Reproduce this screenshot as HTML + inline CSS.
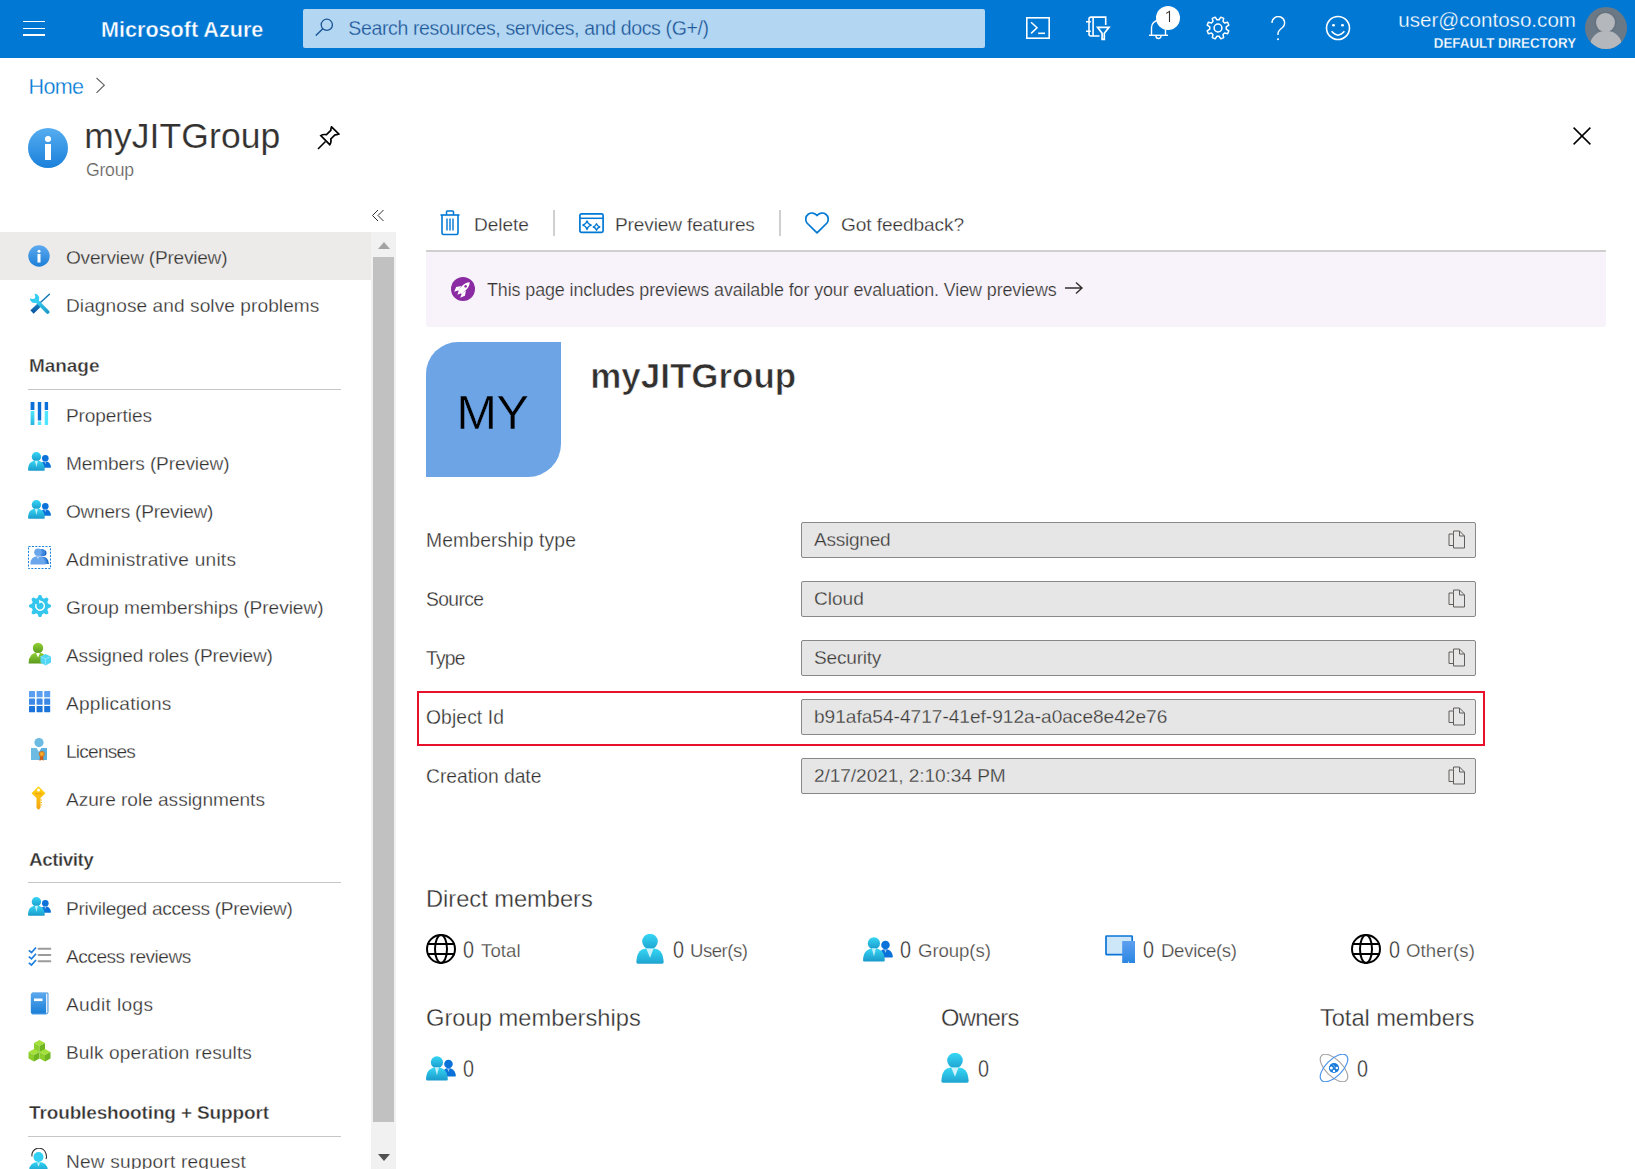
<!DOCTYPE html>
<html><head><meta charset="utf-8">
<style>
*{margin:0;padding:0;box-sizing:border-box}
html,body{width:1635px;height:1169px;overflow:hidden;background:#fff;font-family:"Liberation Sans",sans-serif;color:#323130}
.a{position:absolute;display:block}
.t{position:absolute;line-height:1;white-space:nowrap}
</style></head><body>
<div class="a" style="left:0px;top:0px;width:1635px;height:58px;background:#0078d4;"></div>
<div class="a" style="left:23px;top:20.8px;width:22px;height:1.6px;background:#fff;"></div>
<div class="a" style="left:23px;top:27.5px;width:22px;height:1.6px;background:#fff;"></div>
<div class="a" style="left:23px;top:34.2px;width:22px;height:1.6px;background:#fff;"></div>
<div class="t" style="left:101.00px;top:18.72px;font-size:21.60px;color:#fff;font-weight:700;-webkit-text-stroke:0.41px #0078d4;">Microsoft Azure</div>
<div class="a" style="left:303px;top:9px;width:682px;height:39px;background:#b3d6f2;border-radius:2px"></div>
<svg class="a" style="left:315px;top:18px;" width="18" height="18" viewBox="0 0 18 18"><circle cx="11.8" cy="6.8" r="5.6" fill="none" stroke="#1a5596" stroke-width="1.3"/><line x1="7.8" y1="10.8" x2="0.8" y2="17.6" stroke="#1a5596" stroke-width="1.4"/></svg>
<div class="t" style="left:348.30px;top:18.89px;font-size:19.50px;color:#1d5796;font-weight:400;-webkit-text-stroke:0.27px #b3d6f2;letter-spacing:-0.36px">Search resources, services, and docs (G+/)</div>
<svg class="a" style="left:1026px;top:17px;" width="24" height="22" viewBox="0 0 24 22"><rect x="0.8" y="0.8" width="22.4" height="20.4" fill="none" stroke="#fff" stroke-width="1.6"/><polyline points="5.1,5.3 11,10.8 5.1,16.4" fill="none" stroke="#fff" stroke-width="1.5"/><line x1="12.2" y1="16.3" x2="19" y2="16.3" stroke="#fff" stroke-width="1.6"/></svg>
<svg class="a" style="left:1086px;top:16px;" width="26" height="26" viewBox="0 0 26 26"><g fill="none" stroke="#fff" stroke-width="1.6"><path d="M13.5 20 H5 Q3 20 3 18 V3 Q3 1.1 5 1.1 H19.7 V9"/><path d="M7.1 1 V20"/><path d="M0 5.7 H4.8 M0 15.2 H4.8"/></g><path d="M11.6 11.4 H23 L18.3 17.3 V23.3 H16.1 V17.3 Z" fill="#0078d4" stroke="#fff" stroke-width="1.7" stroke-linejoin="miter"/></svg>
<svg class="a" style="left:1148px;top:16px;" width="21" height="25" viewBox="0 0 21 25"><path d="M3.5 19 V11.5 A7 7 0 0 1 17.5 11.5 V19" fill="none" stroke="#fff" stroke-width="1.4"/><line x1="1" y1="19.3" x2="20" y2="19.3" stroke="#fff" stroke-width="1.4"/><path d="M8 20 A2.5 2.5 0 0 0 13 20" fill="none" stroke="#fff" stroke-width="1.4"/></svg>
<div class="a" style="left:1156px;top:6px;width:24px;height:24px;border-radius:50%;background:#fff"></div>
<svg class="a" style="left:1164px;top:10px;" width="8" height="13" viewBox="0 0 8 13"><path d="M2.2 3.4 L5.5 1.4 V12" fill="none" stroke="#323130" stroke-width="1.1"/></svg>
<svg class="a" style="left:1206px;top:16px;" width="24" height="24" viewBox="0 0 24 24"><g fill="none" stroke="#fff" stroke-width="1.5"><polygon points="13.08,3.77 14.80,1.16 17.68,2.35 17.05,5.42 18.58,6.95 21.65,6.32 22.84,9.20 20.23,10.92 20.23,13.08 22.84,14.80 21.65,17.68 18.58,17.05 17.05,18.58 17.68,21.65 14.80,22.84 13.08,20.23 10.92,20.23 9.20,22.84 6.32,21.65 6.95,18.58 5.42,17.05 2.35,17.68 1.16,14.80 3.77,13.08 3.77,10.92 1.16,9.20 2.35,6.32 5.42,6.95 6.95,5.42 6.32,2.35 9.20,1.16 10.92,3.77" stroke-linejoin="round"/><circle cx="12" cy="12" r="3.9"/></g></svg>
<svg class="a" style="left:1271px;top:16px;" width="15" height="25" viewBox="0 0 15 25"><path d="M1 7 A6.3 6.3 0 1 1 11.5 11.5 Q7 15 7 17.5 V19" fill="none" stroke="#fff" stroke-width="1.4"/><circle cx="7" cy="23.2" r="1" fill="#fff"/></svg>
<svg class="a" style="left:1325px;top:15px;" width="26" height="26" viewBox="0 0 26 26"><circle cx="13" cy="13" r="11.5" fill="none" stroke="#fff" stroke-width="1.6"/><ellipse cx="8.5" cy="10.2" rx="1.5" ry="1.2" fill="#fff"/><ellipse cx="17.5" cy="10.2" rx="1.5" ry="1.2" fill="#fff"/><path d="M6.6 16.3 Q13 24 19.4 16.3" fill="none" stroke="#fff" stroke-width="1.5"/></svg>
<div class="t" style="right:59.00px;top:9.56px;font-size:20.60px;color:#fff;font-weight:400;-webkit-text-stroke:0.28px #0078d4;">user@contoso.com</div>
<div class="t" style="right:59.00px;top:34.88px;font-size:15.50px;color:#fff;font-weight:700;-webkit-text-stroke:0.29px #0078d4;transform:scaleX(0.862);transform-origin:right center">DEFAULT DIRECTORY</div>
<div class="a" style="left:1585px;top:7px;width:42px;height:42px;border-radius:50%;background:#6b7886;overflow:hidden"><div class="a" style="left:11px;top:6px;width:19px;height:19px;border-radius:50%;background:#b4b8bd;box-shadow:0 0 0 1.5px #66727f"></div><div class="a" style="left:5px;top:24px;width:32px;height:22px;border-radius:15px 15px 4px 4px;background:#b4b8bd"></div></div>
<div class="t" style="left:28.60px;top:76.02px;font-size:21.60px;color:#0078d4;font-weight:400;-webkit-text-stroke:0.30px #fff;letter-spacing:-0.75px">Home</div>
<svg class="a" style="left:95px;top:77px;" width="11" height="17" viewBox="0 0 11 17"><polyline points="1.5,1 9.3,8.2 1.5,15.8" fill="none" stroke="#605e5c" stroke-width="1.1"/></svg>
<div class="a" style="left:28px;top:128px;width:40px;height:40px;border-radius:50%;background:linear-gradient(#56adf0,#1a80db)"></div>
<div class="a" style="left:45.1px;top:136px;width:5.8px;height:5.6px;border-radius:50%;background:#fff"></div>
<div class="a" style="left:45.3px;top:143.9px;width:5.3px;height:16.1px;background:#fff;"></div>
<div class="t" style="left:84.30px;top:118.95px;font-size:35.50px;color:#323130;font-weight:400;-webkit-text-stroke:0.20px #fff;letter-spacing:0.083px;">myJITGroup</div>
<div class="t" style="left:86.00px;top:161.70px;font-size:17.60px;color:#605e5c;font-weight:400;-webkit-text-stroke:0.24px #fff;letter-spacing:-0.232px;">Group</div>
<svg class="a" style="left:316px;top:125.5px;" width="24" height="25" viewBox="0 0 24 25"><path d="M2 23 L9.5 15.5" stroke="#000" stroke-width="1.6"/><path d="M4.8 9.6 Q7 8 10.5 8.7 L14.8 4.4 Q14.8 2.5 15.5 0.8 L22.8 8 Q21 8.8 19 8.8 L14.8 13 Q15.5 16.5 13.8 18.7 Z" fill="none" stroke="#000" stroke-width="1.7" stroke-linejoin="miter"/></svg>
<svg class="a" style="left:1572px;top:126px;" width="20" height="20" viewBox="0 0 20 20"><path d="M1.6 1.6 L18.4 18.4 M18.4 1.6 L1.6 18.4" stroke="#000" stroke-width="1.5"/></svg>
<svg class="a" style="left:371px;top:209px;" width="14" height="14" viewBox="0 0 14 14"><polyline points="7,1 1.5,6.5 7,12" fill="none" stroke="#323130" stroke-width="1"/><polyline points="12.5,1 7,6.5 12.5,12" fill="none" stroke="#323130" stroke-width="1"/></svg>
<div class="a" style="left:0px;top:232px;width:371px;height:48px;background:#edebe9;"></div>
<div class="a" style="left:371px;top:232px;width:25px;height:937px;background:#f1f1f1;"></div>
<div class="a" style="left:373px;top:257px;width:21px;height:865px;background:#c1c1c1;"></div>
<svg class="a" style="left:378px;top:241px;" width="12" height="8" viewBox="0 0 12 8"><polygon points="0,8 6,1 12,8" fill="#a3a3a3"/></svg>
<svg class="a" style="left:378px;top:1154px;" width="12" height="8" viewBox="0 0 12 8"><polygon points="0,0 12,0 6,7" fill="#505050"/></svg>
<div class="t" style="left:66.00px;top:247.83px;font-size:19.10px;color:#323130;font-weight:400;-webkit-text-stroke:0.26px #edebe9;letter-spacing:-0.235px;">Overview (Preview)</div>
<div class="t" style="left:66.00px;top:295.83px;font-size:19.10px;color:#323130;font-weight:400;-webkit-text-stroke:0.26px #fff;letter-spacing:0.071px;">Diagnose and solve problems</div>
<div class="t" style="left:66.00px;top:405.83px;font-size:19.10px;color:#323130;font-weight:400;-webkit-text-stroke:0.26px #fff;letter-spacing:-0.122px;">Properties</div>
<div class="t" style="left:66.00px;top:453.83px;font-size:19.10px;color:#323130;font-weight:400;-webkit-text-stroke:0.26px #fff;letter-spacing:-0.125px;">Members (Preview)</div>
<div class="t" style="left:66.00px;top:501.83px;font-size:19.10px;color:#323130;font-weight:400;-webkit-text-stroke:0.26px #fff;letter-spacing:-0.283px;">Owners (Preview)</div>
<div class="t" style="left:66.00px;top:549.83px;font-size:19.10px;color:#323130;font-weight:400;-webkit-text-stroke:0.26px #fff;letter-spacing:0.232px;">Administrative units</div>
<div class="t" style="left:66.00px;top:597.83px;font-size:19.10px;color:#323130;font-weight:400;-webkit-text-stroke:0.26px #fff;letter-spacing:-0.054px;">Group memberships (Preview)</div>
<div class="t" style="left:66.00px;top:645.83px;font-size:19.10px;color:#323130;font-weight:400;-webkit-text-stroke:0.26px #fff;letter-spacing:-0.185px;">Assigned roles (Preview)</div>
<div class="t" style="left:66.00px;top:693.83px;font-size:19.10px;color:#323130;font-weight:400;-webkit-text-stroke:0.26px #fff;letter-spacing:0.223px;">Applications</div>
<div class="t" style="left:66.00px;top:741.83px;font-size:19.10px;color:#323130;font-weight:400;-webkit-text-stroke:0.26px #fff;letter-spacing:-0.778px;">Licenses</div>
<div class="t" style="left:66.00px;top:789.83px;font-size:19.10px;color:#323130;font-weight:400;-webkit-text-stroke:0.26px #fff;letter-spacing:-0.028px;">Azure role assignments</div>
<div class="t" style="left:66.00px;top:898.83px;font-size:19.10px;color:#323130;font-weight:400;-webkit-text-stroke:0.26px #fff;letter-spacing:-0.290px;">Privileged access (Preview)</div>
<div class="t" style="left:66.00px;top:946.83px;font-size:19.10px;color:#323130;font-weight:400;-webkit-text-stroke:0.26px #fff;letter-spacing:-0.477px;">Access reviews</div>
<div class="t" style="left:66.00px;top:994.83px;font-size:19.10px;color:#323130;font-weight:400;-webkit-text-stroke:0.26px #fff;letter-spacing:0.350px;">Audit logs</div>
<div class="t" style="left:66.00px;top:1042.83px;font-size:19.10px;color:#323130;font-weight:400;-webkit-text-stroke:0.26px #fff;letter-spacing:0.108px;">Bulk operation results</div>
<div class="t" style="left:66.00px;top:1151.83px;font-size:19.10px;color:#323130;font-weight:400;-webkit-text-stroke:0.26px #fff;letter-spacing:0.206px;">New support request</div>
<svg class="a" style="left:28px;top:245px;" width="22" height="22" viewBox="0 0 22 22"><defs><linearGradient id="ig" x1="0" y1="0" x2="0" y2="1"><stop offset="0" stop-color="#5ea9ef"/><stop offset="1" stop-color="#1b7fd7"/></linearGradient></defs><circle cx="11" cy="11" r="10.7" fill="url(#ig)"/><circle cx="11" cy="6.3" r="1.5" fill="#fff"/><rect x="9.5" y="9" width="3" height="8.5" fill="#fff"/></svg>
<svg class="a" style="left:29px;top:293px;" width="21" height="22" viewBox="0 0 21 22"><defs><linearGradient id="tg" x1="0" y1="0" x2="1" y2="1"><stop offset="0" stop-color="#35d0f2"/><stop offset="1" stop-color="#1f9ccb"/></linearGradient><linearGradient id="sdg" x1="0" y1="0" x2="0" y2="1"><stop offset="0" stop-color="#1b7fc0"/><stop offset="1" stop-color="#0a58a5"/></linearGradient></defs><path d="M20.4 1.2 L11.2 9.8" stroke="#127ab8" stroke-width="1.5" stroke-linecap="round"/><path d="M11 11.3 L3 19" stroke="url(#sdg)" stroke-width="4.6"/><circle cx="5.6" cy="5.4" r="4.6" fill="#33cdf2"/><path d="M5.6 5.4 L-1 5.4 L-1 -1 L5.6 -1 Z" fill="#fff" transform="rotate(0 5.6 5.4)"/><circle cx="3.9" cy="3.7" r="2.4" fill="#fff"/><path d="M7.8 8 L18.6 19" stroke="url(#tg)" stroke-width="3.8" stroke-linecap="round"/></svg>
<svg class="a" style="left:30px;top:401px;" width="19" height="25" viewBox="0 0 19 25"><defs><linearGradient id="cg" x1="0" y1="0" x2="0" y2="1"><stop offset="0" stop-color="#50e6ff"/><stop offset="1" stop-color="#27b4dd"/></linearGradient></defs><rect x="0.6" y="1" width="3.8" height="8" fill="#0a6fd6"/><rect x="0.6" y="10" width="3.8" height="14" fill="url(#cg)"/><rect x="7.8" y="1" width="3.4" height="18.5" fill="#0a6fd6"/><rect x="7.8" y="20.5" width="3.4" height="3.5" fill="#50e6ff"/><rect x="14.7" y="1" width="3.4" height="8" fill="#0a6fd6"/><rect x="14.7" y="10" width="3.4" height="14" fill="#50e6ff"/></svg>
<svg class="a" style="left:28px;top:452px;" width="24.0" height="20.0" viewBox="0 0 24 20"><defs><linearGradient id="pg470" x1="0" y1="0" x2="0" y2="1"><stop offset="0" stop-color="#36d6f5"/><stop offset="1" stop-color="#1a9acb"/></linearGradient></defs><circle cx="17.3" cy="6.2" r="3.3" fill="#0a72d8"/><path d="M12.5 15.7 Q12.8 11 15 9.8 Q16 9.3 17.3 9.3 Q18.6 9.3 19.6 9.8 Q22.5 11 23 15 Q23 15.7 22.3 15.7 Z" fill="#0a72d8"/><path d="M16.3 9.6 L17.3 12.3 L18.3 9.6 Z" fill="#fff" opacity=".6"/><circle cx="8.4" cy="4.8" r="4.7" fill="url(#pg470)"/><path d="M0 17.8 Q0.3 12 3 10.3 Q5 8.6 8.4 8.6 Q11.8 8.6 13.8 10.3 Q16.5 12 16.8 17.8 Q16.8 18.8 15.8 18.8 H1 Q0 18.8 0 17.8 Z" fill="url(#pg470)"/><path d="M6.8 8.7 L8.4 15 L10 8.7 Z" fill="#fff" opacity=".7"/></svg>
<svg class="a" style="left:28px;top:500px;" width="24.0" height="20.0" viewBox="0 0 24 20"><defs><linearGradient id="pg518" x1="0" y1="0" x2="0" y2="1"><stop offset="0" stop-color="#36d6f5"/><stop offset="1" stop-color="#1a9acb"/></linearGradient></defs><circle cx="17.3" cy="6.2" r="3.3" fill="#0a72d8"/><path d="M12.5 15.7 Q12.8 11 15 9.8 Q16 9.3 17.3 9.3 Q18.6 9.3 19.6 9.8 Q22.5 11 23 15 Q23 15.7 22.3 15.7 Z" fill="#0a72d8"/><path d="M16.3 9.6 L17.3 12.3 L18.3 9.6 Z" fill="#fff" opacity=".6"/><circle cx="8.4" cy="4.8" r="4.7" fill="url(#pg518)"/><path d="M0 17.8 Q0.3 12 3 10.3 Q5 8.6 8.4 8.6 Q11.8 8.6 13.8 10.3 Q16.5 12 16.8 17.8 Q16.8 18.8 15.8 18.8 H1 Q0 18.8 0 17.8 Z" fill="url(#pg518)"/><path d="M6.8 8.7 L8.4 15 L10 8.7 Z" fill="#fff" opacity=".7"/></svg>
<svg class="a" style="left:28px;top:546px;" width="23" height="23" viewBox="0 0 23 23"><rect x="0.5" y="0.5" width="22" height="22" fill="none" stroke="#1a7fd8" stroke-width="1" stroke-dasharray="2,1.4"/><circle cx="15.5" cy="7" r="3" fill="#1066c8"/><path d="M10 18 Q11 11 15.5 11 Q20 11 21 18 Z" fill="#1066c8"/><circle cx="13.8" cy="6.5" r="3.4" fill="#3f86dd"/><path d="M8 18 Q9 10.5 13.8 10.5 Q19 10.5 19.5 18 Z" fill="#3f86dd"/><circle cx="10" cy="6.2" r="3.8" fill="#6aa6ec"/><path d="M2.3 18.5 Q2.3 10.3 10 10.3 Q17.6 10.3 17.6 18.5 Z" fill="#6aa6ec"/><path d="M9 11 L10 13.5 L11 11 Z" fill="#fff" opacity=".6"/></svg>
<svg class="a" style="left:28.5px;top:594.5px;" width="22" height="22" viewBox="0 0 22 22"><polygon points="11.00,0.00 12.08,0.05 12.87,1.58 13.41,3.06 14.18,3.33 14.91,3.68 16.33,3.02 17.98,2.50 18.78,3.22 19.50,4.02 18.98,5.67 18.32,7.09 18.67,7.82 18.94,8.59 20.42,9.13 21.95,9.92 22.00,11.00 21.95,12.08 20.42,12.87 18.94,13.41 18.67,14.18 18.32,14.91 18.98,16.33 19.50,17.98 18.78,18.78 17.98,19.50 16.33,18.98 14.91,18.32 14.18,18.67 13.41,18.94 12.87,20.42 12.08,21.95 11.00,22.00 9.92,21.95 9.13,20.42 8.59,18.94 7.82,18.67 7.09,18.32 5.67,18.98 4.02,19.50 3.22,18.78 2.50,17.98 3.02,16.33 3.68,14.91 3.33,14.18 3.06,13.41 1.58,12.87 0.05,12.08 0.00,11.00 0.05,9.92 1.58,9.13 3.06,8.59 3.33,7.82 3.68,7.09 3.02,5.67 2.50,4.02 3.22,3.22 4.02,2.50 5.67,3.02 7.09,3.68 7.82,3.33 8.59,3.06 9.13,1.58 9.92,0.05" fill="#33c7ee"/><path d="M7.2 9 A4.3 4.3 0 1 0 11.5 6.6" fill="none" stroke="#fff" stroke-width="1.5"/><path d="M10 4.5 L12.8 6.7 L10.3 8.8 Z" fill="#fff"/></svg>
<svg class="a" style="left:28px;top:642px;" width="23" height="24" viewBox="0 0 23 24"><defs><linearGradient id="rg" x1="0" y1="0" x2="0" y2="1"><stop offset="0" stop-color="#93d234"/><stop offset="1" stop-color="#5a9a1e"/></linearGradient></defs><circle cx="10" cy="6" r="5.2" fill="url(#rg)"/><path d="M0.6 21.5 Q0.6 10.5 10 10.5 Q19.4 10.5 19.4 21.5 Z" fill="url(#rg)"/><path d="M8 11 L10 15.5 L12 11 Z" fill="#fff"/><path d="M17.5 12 L23 14.5 L23 20.5 L17.5 23.5 L12.5 20.5 L12.5 14.5 Z" fill="#50d7f5"/><path d="M12.5 14.5 L17.5 17 L23 14.5 M17.5 17 V23.5" fill="none" stroke="#9fe8fb" stroke-width=".8"/></svg>
<svg class="a" style="left:29px;top:691px;" width="22" height="22" viewBox="0 0 22 22"><rect x="0.0" y="0.0" width="6" height="6.3" rx=".6" fill="#5b9ff0"/><rect x="7.6" y="0.0" width="6" height="6.3" rx=".6" fill="#5b9ff0"/><rect x="15.2" y="0.0" width="6" height="6.3" rx=".6" fill="#5b9ff0"/><rect x="0.0" y="7.5" width="6" height="6.3" rx=".6" fill="#3d8ae6"/><rect x="7.6" y="7.5" width="6" height="6.3" rx=".6" fill="#3d8ae6"/><rect x="15.2" y="7.5" width="6" height="6.3" rx=".6" fill="#3d8ae6"/><rect x="0.0" y="15.0" width="6" height="6.3" rx=".6" fill="#1a74d9"/><rect x="7.6" y="15.0" width="6" height="6.3" rx=".6" fill="#1a74d9"/><rect x="15.2" y="15.0" width="6" height="6.3" rx=".6" fill="#1a74d9"/></svg>
<svg class="a" style="left:30px;top:738px;" width="18" height="23" viewBox="0 0 18 23"><circle cx="9" cy="4.6" r="4.6" fill="#6dbbe3"/><path d="M1 10 H6.5 L9 14 L11.5 10 H17 V22 H1 Z" fill="#6dbbe3"/><path d="M9 14 V22 H17 V10 H11.5 Z" fill="#4fa9db" opacity=".6"/><path d="M10.5 17 L9.5 23 L11.8 21.5 L13.5 23 L13 17 Z" fill="#d35d14"/><circle cx="11.8" cy="16" r="2.6" fill="#f2a527" stroke="#d35d14" stroke-width=".7"/></svg>
<svg class="a" style="left:31px;top:786px;" width="15" height="24" viewBox="0 0 15 24"><defs><linearGradient id="kg" x1="0" y1="0" x2="0" y2="1"><stop offset="0" stop-color="#ffd70d"/><stop offset="1" stop-color="#f5a214"/></linearGradient></defs><path d="M7.5 0.3 L14.5 7.3 L9.5 12 V22 L7.5 23.7 L5.5 22 V12 L0.5 7.3 Z" fill="url(#kg)"/><circle cx="7.5" cy="4" r="1.5" fill="#fff"/><rect x="4" y="6.8" width="7" height="1.6" fill="#f0a01a" opacity=".7"/><path d="M9.5 14 H11 M9.5 16.5 H11 M9.5 19 H11" stroke="#f5b70e" stroke-width="1"/></svg>
<svg class="a" style="left:28px;top:897px;" width="24.0" height="20.0" viewBox="0 0 24 20"><defs><linearGradient id="pg915" x1="0" y1="0" x2="0" y2="1"><stop offset="0" stop-color="#36d6f5"/><stop offset="1" stop-color="#1a9acb"/></linearGradient></defs><circle cx="17.3" cy="6.2" r="3.3" fill="#0a72d8"/><path d="M12.5 15.7 Q12.8 11 15 9.8 Q16 9.3 17.3 9.3 Q18.6 9.3 19.6 9.8 Q22.5 11 23 15 Q23 15.7 22.3 15.7 Z" fill="#0a72d8"/><path d="M16.3 9.6 L17.3 12.3 L18.3 9.6 Z" fill="#fff" opacity=".6"/><circle cx="8.4" cy="4.8" r="4.7" fill="url(#pg915)"/><path d="M0 17.8 Q0.3 12 3 10.3 Q5 8.6 8.4 8.6 Q11.8 8.6 13.8 10.3 Q16.5 12 16.8 17.8 Q16.8 18.8 15.8 18.8 H1 Q0 18.8 0 17.8 Z" fill="url(#pg915)"/><path d="M6.8 8.7 L8.4 15 L10 8.7 Z" fill="#fff" opacity=".7"/></svg>
<svg class="a" style="left:28px;top:946px;" width="24" height="21" viewBox="0 0 24 21"><path d="M0.8 4.3 L3.5 6.5 L8 1.5" fill="none" stroke="#1a7fe0" stroke-width="1.7"/><line x1="10.6" y1="2.7" x2="22.3" y2="2.7" stroke="#9b9b9b" stroke-width="2.1" stroke-linecap="round"/><path d="M0.8 10.6 L3.5 12.8 L8 7.8" fill="none" stroke="#1a7fe0" stroke-width="1.7"/><line x1="10.6" y1="9.0" x2="22.3" y2="9.0" stroke="#9b9b9b" stroke-width="2.1" stroke-linecap="round"/><path d="M0.8 16.8 L3.5 19.0 L8 14.0" fill="none" stroke="#1a7fe0" stroke-width="1.7"/><line x1="10.6" y1="15.2" x2="22.3" y2="15.2" stroke="#9b9b9b" stroke-width="2.1" stroke-linecap="round"/></svg>
<svg class="a" style="left:29.5px;top:992px;" width="19" height="23" viewBox="0 0 19 23"><defs><linearGradient id="lg" x1="0" y1="0" x2="0" y2="1"><stop offset="0" stop-color="#5ba8ee"/><stop offset="1" stop-color="#1a7fd8"/></linearGradient></defs><path d="M2 1 H18 V20 Q18 22 16 22 H2 Z" fill="#e3eefa" stroke="#1f7fd6" stroke-width=".8"/><path d="M1.5 2 Q1.5 0.8 3 0.8 H16 V21.8 H2.5 Q0.8 21.8 0.8 20 V2 Z" fill="url(#lg)"/><rect x="4" y="6.5" width="8.5" height="2.6" fill="#fff"/></svg>
<svg class="a" style="left:28px;top:1040px;" width="23" height="22" viewBox="0 0 23 22"><path d="M6.0 3.0 L11.5 0.0 L17.0 3.0 L11.5 6.0 Z" fill="#a4e03a"/><path d="M6.0 3.0 L11.5 6.0 L11.5 12.5 L6.0 9.5 Z" fill="#8ccf2c"/><path d="M17.0 3.0 L11.5 6.0 L11.5 12.5 L17.0 9.5 Z" fill="#6fb51f"/><path d="M0.5 12.0 L6.0 9.0 L11.5 12.0 L6.0 15.0 Z" fill="#a4e03a"/><path d="M0.5 12.0 L6.0 15.0 L6.0 21.5 L0.5 18.5 Z" fill="#8ccf2c"/><path d="M11.5 12.0 L6.0 15.0 L6.0 21.5 L11.5 18.5 Z" fill="#6fb51f"/><path d="M11.5 12.0 L17.0 9.0 L22.5 12.0 L17.0 15.0 Z" fill="#a4e03a"/><path d="M11.5 12.0 L17.0 15.0 L17.0 21.5 L11.5 18.5 Z" fill="#8ccf2c"/><path d="M22.5 12.0 L17.0 15.0 L17.0 21.5 L22.5 18.5 Z" fill="#6fb51f"/></svg>
<svg class="a" style="left:29px;top:1148px;" width="21" height="22" viewBox="0 0 21 22"><defs><linearGradient id="sg" x1="0" y1="0" x2="0" y2="1"><stop offset="0" stop-color="#32d4f5"/><stop offset="1" stop-color="#1a9dc9"/></linearGradient></defs><path d="M3 8.5 A7 7 0 0 1 17 6 Q18 9 17 11" fill="none" stroke="#323130" stroke-width="1.1"/><circle cx="9.5" cy="9" r="5" fill="#32d0f2"/><path d="M0 24 Q0 14 9.5 14 Q19 14 19 24 Z" fill="url(#sg)"/><path d="M8 14.5 L9.5 19 L11 14.5 Z" fill="#fff" opacity=".7"/></svg>
<div class="t" style="left:29.00px;top:355.92px;font-size:19.00px;color:#323130;font-weight:700;-webkit-text-stroke:0.36px #fff;letter-spacing:-0.056px;">Manage</div>
<div class="a" style="left:28px;top:389px;width:313px;height:1px;background:#c8c6c4;"></div>
<div class="t" style="left:29.00px;top:849.92px;font-size:19.00px;color:#323130;font-weight:700;-webkit-text-stroke:0.36px #fff;letter-spacing:-0.540px;">Activity</div>
<div class="a" style="left:28px;top:882px;width:313px;height:1px;background:#c8c6c4;"></div>
<div class="t" style="left:29.00px;top:1102.92px;font-size:19.00px;color:#323130;font-weight:700;-webkit-text-stroke:0.36px #fff;letter-spacing:-0.133px;">Troubleshooting + Support</div>
<div class="a" style="left:28px;top:1136px;width:313px;height:1px;background:#c8c6c4;"></div>
<div class="t" style="left:474.00px;top:214.83px;font-size:19.10px;color:#323130;font-weight:400;-webkit-text-stroke:0.26px #fff;letter-spacing:-0.040px;">Delete</div>
<div class="t" style="left:615.00px;top:214.83px;font-size:19.10px;color:#323130;font-weight:400;-webkit-text-stroke:0.26px #fff;letter-spacing:-0.153px;">Preview features</div>
<div class="t" style="left:841.00px;top:214.83px;font-size:19.10px;color:#323130;font-weight:400;-webkit-text-stroke:0.26px #fff;letter-spacing:-0.096px;">Got feedback?</div>
<div class="a" style="left:553px;top:210px;width:2px;height:26px;background:#d2d0ce;"></div>
<div class="a" style="left:779px;top:210px;width:2px;height:26px;background:#d2d0ce;"></div>
<div class="a" style="left:426px;top:250px;width:1180px;height:2px;background:#d2d0ce;"></div>
<svg class="a" style="left:440px;top:210px;" width="20" height="26" viewBox="0 0 20 26"><path d="M0.5 5 H19.5" stroke="#0078d4" stroke-width="1.6"/><path d="M6.5 5 V1.8 Q6.5 1 7.3 1 H12.7 Q13.5 1 13.5 1.8 V5" fill="none" stroke="#0078d4" stroke-width="1.5"/><path d="M2 5 V23 Q2 24.5 3.5 24.5 H16.5 Q18 24.5 18 23 V5" fill="none" stroke="#0078d4" stroke-width="1.6"/><path d="M7 8.5 V20.5 M10 8.5 V20.5 M13 8.5 V20.5" stroke="#0078d4" stroke-width="1.4"/></svg>
<svg class="a" style="left:579px;top:212.5px;" width="25" height="21" viewBox="0 0 25 21"><rect x="0.9" y="0.9" width="23.2" height="18.4" rx="1.5" fill="none" stroke="#0078d4" stroke-width="1.7"/><line x1="1" y1="5.3" x2="24" y2="5.3" stroke="#0078d4" stroke-width="1.5"/><path d="M8.0 7.9 Q8.9 11.3 12.3 12.2 Q8.9 13.1 8.0 16.5 Q7.1 13.1 3.7 12.2 Q7.1 11.3 8.0 7.9 Z M17.5 10.7 Q18.2 13.3 20.8 14.0 Q18.2 14.7 17.5 17.3 Q16.8 14.7 14.2 14.0 Q16.8 13.3 17.5 10.7 Z" fill="none" stroke="#0078d4" stroke-width="1.3" stroke-linejoin="round"/></svg>
<svg class="a" style="left:804px;top:211px;" width="26" height="23" viewBox="0 0 26 23"><path d="M13 21.8 L3 12 A5.5 5.5 0 0 1 13 4.5 A5.5 5.5 0 0 1 23 12 Z" fill="none" stroke="#0078d4" stroke-width="1.7" stroke-linejoin="round"/></svg>
<div class="a" style="left:426px;top:252px;width:1180px;height:75px;background:#f8f3fa;border-radius:3px"></div>
<div class="a" style="left:451px;top:277px;width:24px;height:24px;border-radius:50%;background:#8a2ba3"></div>
<svg class="a" style="left:451px;top:277px;" width="24" height="24" viewBox="0 0 24 24"><g transform="rotate(45 12 12)" fill="#fff"><path d="M12 2.5 Q15.3 6 14.8 12 L14.4 16.5 H9.6 L9.2 12 Q8.7 6 12 2.5 Z"/><path d="M8.9 11 L5.8 15.5 L7.8 20.2 L9.6 16 Z"/><path d="M15.1 11 L18.2 15.5 L16.2 20.2 L14.4 16 Z"/><path d="M10.3 16.3 H13.7 L12 20 Z"/><circle cx="12" cy="8.3" r="1.4" fill="#8a2ba3"/></g></svg>
<div class="t" style="left:487.00px;top:282.05px;font-size:17.90px;color:#323130;font-weight:400;-webkit-text-stroke:0.24px #f8f3fa;letter-spacing:-0.095px;">This page includes previews available for your evaluation. View previews</div>
<svg class="a" style="left:1064px;top:281px;" width="20" height="14" viewBox="0 0 20 14"><path d="M1 7 H18 M12 1.5 L18 7 L12 12.5" fill="none" stroke="#323130" stroke-width="1.4"/></svg>
<div class="a" style="left:426px;top:342px;width:135px;height:135px;background:#6ca4e6;border-radius:32px 0 33px 0"></div>
<div class="t" style="left:456.50px;top:387.94px;font-size:48.50px;color:#000;font-weight:400;-webkit-text-stroke:0.40px #6ca4e6;letter-spacing:-0.4px">MY</div>
<div class="t" style="left:590.20px;top:358.37px;font-size:35.00px;color:#323130;font-weight:700;-webkit-text-stroke:0.66px #fff;letter-spacing:-0.017px;">myJITGroup</div>
<div class="t" style="left:426.00px;top:530.66px;font-size:19.30px;color:#323130;font-weight:400;-webkit-text-stroke:0.26px #fff;letter-spacing:0.141px;">Membership type</div>
<div class="a" style="left:801px;top:522px;width:675px;height:36px;background:#e6e6e6;border:1px solid #8a8886;border-radius:2px"></div>
<div class="t" style="left:814.00px;top:529.83px;font-size:19.10px;color:#3b3a39;font-weight:400;-webkit-text-stroke:0.26px #e6e6e6;letter-spacing:-0.272px;">Assigned</div>
<svg class="a" style="left:1448px;top:530px;" width="18" height="19" viewBox="0 0 18 19"><path d="M5.5 3.5 V1 H11.5 L16.5 6 V18 H5.5 Z M11.5 1 V6 H16.5" fill="#e6e6e6" stroke="#605e5c" stroke-width="1"/><path d="M5.5 4 H1 V15.5 H5.5" fill="none" stroke="#605e5c" stroke-width="1"/></svg>
<div class="t" style="left:426.00px;top:589.66px;font-size:19.30px;color:#323130;font-weight:400;-webkit-text-stroke:0.26px #fff;letter-spacing:-0.636px;">Source</div>
<div class="a" style="left:801px;top:581px;width:675px;height:36px;background:#e6e6e6;border:1px solid #8a8886;border-radius:2px"></div>
<div class="t" style="left:814.00px;top:588.83px;font-size:19.10px;color:#3b3a39;font-weight:400;-webkit-text-stroke:0.26px #e6e6e6;letter-spacing:-0.013px;">Cloud</div>
<svg class="a" style="left:1448px;top:589px;" width="18" height="19" viewBox="0 0 18 19"><path d="M5.5 3.5 V1 H11.5 L16.5 6 V18 H5.5 Z M11.5 1 V6 H16.5" fill="#e6e6e6" stroke="#605e5c" stroke-width="1"/><path d="M5.5 4 H1 V15.5 H5.5" fill="none" stroke="#605e5c" stroke-width="1"/></svg>
<div class="t" style="left:426.00px;top:648.66px;font-size:19.30px;color:#323130;font-weight:400;-webkit-text-stroke:0.26px #fff;letter-spacing:-0.760px;">Type</div>
<div class="a" style="left:801px;top:640px;width:675px;height:36px;background:#e6e6e6;border:1px solid #8a8886;border-radius:2px"></div>
<div class="t" style="left:814.00px;top:647.83px;font-size:19.10px;color:#3b3a39;font-weight:400;-webkit-text-stroke:0.26px #e6e6e6;letter-spacing:-0.222px;">Security</div>
<svg class="a" style="left:1448px;top:648px;" width="18" height="19" viewBox="0 0 18 19"><path d="M5.5 3.5 V1 H11.5 L16.5 6 V18 H5.5 Z M11.5 1 V6 H16.5" fill="#e6e6e6" stroke="#605e5c" stroke-width="1"/><path d="M5.5 4 H1 V15.5 H5.5" fill="none" stroke="#605e5c" stroke-width="1"/></svg>
<div class="t" style="left:426.00px;top:707.66px;font-size:19.30px;color:#323130;font-weight:400;-webkit-text-stroke:0.26px #fff;letter-spacing:0.100px;">Object Id</div>
<div class="a" style="left:801px;top:699px;width:675px;height:36px;background:#e6e6e6;border:1px solid #8a8886;border-radius:2px"></div>
<div class="t" style="left:814.00px;top:706.83px;font-size:19.10px;color:#3b3a39;font-weight:400;-webkit-text-stroke:0.26px #e6e6e6;letter-spacing:-0.007px;">b91afa54-4717-41ef-912a-a0ace8e42e76</div>
<svg class="a" style="left:1448px;top:707px;" width="18" height="19" viewBox="0 0 18 19"><path d="M5.5 3.5 V1 H11.5 L16.5 6 V18 H5.5 Z M11.5 1 V6 H16.5" fill="#e6e6e6" stroke="#605e5c" stroke-width="1"/><path d="M5.5 4 H1 V15.5 H5.5" fill="none" stroke="#605e5c" stroke-width="1"/></svg>
<div class="t" style="left:426.00px;top:766.66px;font-size:19.30px;color:#323130;font-weight:400;-webkit-text-stroke:0.26px #fff;letter-spacing:-0.033px;">Creation date</div>
<div class="a" style="left:801px;top:758px;width:675px;height:36px;background:#e6e6e6;border:1px solid #8a8886;border-radius:2px"></div>
<div class="t" style="left:814.00px;top:765.83px;font-size:19.10px;color:#3b3a39;font-weight:400;-webkit-text-stroke:0.26px #e6e6e6;letter-spacing:-0.075px;">2/17/2021, 2:10:34 PM</div>
<svg class="a" style="left:1448px;top:766px;" width="18" height="19" viewBox="0 0 18 19"><path d="M5.5 3.5 V1 H11.5 L16.5 6 V18 H5.5 Z M11.5 1 V6 H16.5" fill="#e6e6e6" stroke="#605e5c" stroke-width="1"/><path d="M5.5 4 H1 V15.5 H5.5" fill="none" stroke="#605e5c" stroke-width="1"/></svg>
<div class="a" style="left:417px;top:691px;width:1068px;height:55px;border:2px solid #e8112b"></div>
<div class="t" style="left:426.00px;top:887.94px;font-size:23.70px;color:#323130;font-weight:400;-webkit-text-stroke:0.32px #fff;letter-spacing:-0.025px;">Direct members</div>
<svg class="a" style="left:426px;top:934px;" width="30" height="30" viewBox="0 0 30 30"><g fill="none" stroke="#000" stroke-width="2"><circle cx="15" cy="15" r="14"/><ellipse cx="15" cy="15" rx="6" ry="14"/><line x1="1" y1="10" x2="29" y2="10"/><line x1="1" y1="20" x2="29" y2="20"/></g></svg>
<div class="t" style="left:462.70px;top:938.53px;font-size:23.00px;color:#323130;font-weight:400;-webkit-text-stroke:0.31px #fff;transform:scaleX(0.86);transform-origin:left center">0</div>
<div class="t" style="left:481.00px;top:942.26px;font-size:18.60px;color:#484644;font-weight:400;-webkit-text-stroke:0.25px #fff;letter-spacing:0.088px;">Total</div>
<svg class="a" style="left:636px;top:934px;" width="28" height="30" viewBox="0 0 28 30"><defs><linearGradient id="ug636" x1="0" y1="0" x2="0" y2="1"><stop offset="0" stop-color="#36d8f6"/><stop offset="1" stop-color="#1fa3d0"/></linearGradient></defs><circle cx="14" cy="7.6" r="7.8" fill="url(#ug636)"/><path d="M0.3 28 Q0.8 18 6 15.5 Q9 14.3 14 14.3 Q19 14.3 22 15.5 Q27.2 18 27.7 28 Q27.7 29.8 26 29.8 H2 Q0.3 29.8 0.3 28 Z" fill="url(#ug636)"/><path d="M10.2 14.6 H17.6 L14 23.8 Z" fill="#e0f6fc" opacity="0.9"/></svg>
<div class="t" style="left:672.70px;top:938.53px;font-size:23.00px;color:#323130;font-weight:400;-webkit-text-stroke:0.31px #fff;transform:scaleX(0.86);transform-origin:left center">0</div>
<div class="t" style="left:690.00px;top:942.26px;font-size:18.60px;color:#484644;font-weight:400;-webkit-text-stroke:0.25px #fff;letter-spacing:-0.501px;">User(s)</div>
<svg class="a" style="left:863px;top:936.5px;" width="31.2" height="26.0" viewBox="0 0 24 20"><defs><linearGradient id="pgg863" x1="0" y1="0" x2="0" y2="1"><stop offset="0" stop-color="#36d6f5"/><stop offset="1" stop-color="#1a9acb"/></linearGradient></defs><circle cx="17.3" cy="6.2" r="3.3" fill="#0a72d8"/><path d="M12.5 15.7 Q12.8 11 15 9.8 Q16 9.3 17.3 9.3 Q18.6 9.3 19.6 9.8 Q22.5 11 23 15 Q23 15.7 22.3 15.7 Z" fill="#0a72d8"/><path d="M16.3 9.6 L17.3 12.3 L18.3 9.6 Z" fill="#fff" opacity=".6"/><circle cx="8.4" cy="4.8" r="4.7" fill="url(#pgg863)"/><path d="M0 17.8 Q0.3 12 3 10.3 Q5 8.6 8.4 8.6 Q11.8 8.6 13.8 10.3 Q16.5 12 16.8 17.8 Q16.8 18.8 15.8 18.8 H1 Q0 18.8 0 17.8 Z" fill="url(#pgg863)"/><path d="M6.8 8.7 L8.4 15 L10 8.7 Z" fill="#fff" opacity=".7"/></svg>
<div class="t" style="left:899.70px;top:938.53px;font-size:23.00px;color:#323130;font-weight:400;-webkit-text-stroke:0.31px #fff;transform:scaleX(0.86);transform-origin:left center">0</div>
<div class="t" style="left:918.00px;top:942.26px;font-size:18.60px;color:#484644;font-weight:400;-webkit-text-stroke:0.25px #fff;letter-spacing:-0.067px;">Group(s)</div>
<svg class="a" style="left:1105px;top:935px;" width="30" height="28" viewBox="0 0 30 28"><defs><linearGradient id="dg" x1="0" y1="0" x2="0" y2="1"><stop offset="0" stop-color="#5d9ff0"/><stop offset="1" stop-color="#2a86e2"/></linearGradient></defs><rect x="1" y="1" width="26.2" height="18.6" rx=".6" fill="#cde6f8" stroke="#0a74d8" stroke-width="1.7"/><path d="M17.2 6 H30 V28 H17.2 Z" fill="url(#dg)"/><path d="M23 27.9 L23.6 25.8 L24.2 27.9 Z" fill="#cde6f8"/></svg>
<div class="t" style="left:1142.70px;top:938.53px;font-size:23.00px;color:#323130;font-weight:400;-webkit-text-stroke:0.31px #fff;transform:scaleX(0.86);transform-origin:left center">0</div>
<div class="t" style="left:1161.00px;top:942.26px;font-size:18.60px;color:#484644;font-weight:400;-webkit-text-stroke:0.25px #fff;letter-spacing:-0.312px;">Device(s)</div>
<svg class="a" style="left:1351px;top:934px;" width="30" height="30" viewBox="0 0 30 30"><g fill="none" stroke="#000" stroke-width="2"><circle cx="15" cy="15" r="14"/><ellipse cx="15" cy="15" rx="6" ry="14"/><line x1="1" y1="10" x2="29" y2="10"/><line x1="1" y1="20" x2="29" y2="20"/></g></svg>
<div class="t" style="left:1388.70px;top:938.53px;font-size:23.00px;color:#323130;font-weight:400;-webkit-text-stroke:0.31px #fff;transform:scaleX(0.86);transform-origin:left center">0</div>
<div class="t" style="left:1406.00px;top:942.26px;font-size:18.60px;color:#484644;font-weight:400;-webkit-text-stroke:0.25px #fff;letter-spacing:0.105px;">Other(s)</div>
<div class="t" style="left:426.00px;top:1006.94px;font-size:23.70px;color:#323130;font-weight:400;-webkit-text-stroke:0.32px #fff;letter-spacing:0.017px;">Group memberships</div>
<div class="t" style="left:941.00px;top:1006.94px;font-size:23.70px;color:#323130;font-weight:400;-webkit-text-stroke:0.32px #fff;letter-spacing:-0.633px;">Owners</div>
<div class="t" style="left:1320.00px;top:1006.94px;font-size:23.70px;color:#323130;font-weight:400;-webkit-text-stroke:0.32px #fff;letter-spacing:-0.073px;">Total members</div>
<svg class="a" style="left:426px;top:1055.5px;" width="31.2" height="26.0" viewBox="0 0 24 20"><defs><linearGradient id="pgg426" x1="0" y1="0" x2="0" y2="1"><stop offset="0" stop-color="#36d6f5"/><stop offset="1" stop-color="#1a9acb"/></linearGradient></defs><circle cx="17.3" cy="6.2" r="3.3" fill="#0a72d8"/><path d="M12.5 15.7 Q12.8 11 15 9.8 Q16 9.3 17.3 9.3 Q18.6 9.3 19.6 9.8 Q22.5 11 23 15 Q23 15.7 22.3 15.7 Z" fill="#0a72d8"/><path d="M16.3 9.6 L17.3 12.3 L18.3 9.6 Z" fill="#fff" opacity=".6"/><circle cx="8.4" cy="4.8" r="4.7" fill="url(#pgg426)"/><path d="M0 17.8 Q0.3 12 3 10.3 Q5 8.6 8.4 8.6 Q11.8 8.6 13.8 10.3 Q16.5 12 16.8 17.8 Q16.8 18.8 15.8 18.8 H1 Q0 18.8 0 17.8 Z" fill="url(#pgg426)"/><path d="M6.8 8.7 L8.4 15 L10 8.7 Z" fill="#fff" opacity=".7"/></svg>
<div class="t" style="left:462.70px;top:1057.53px;font-size:23.00px;color:#323130;font-weight:400;-webkit-text-stroke:0.31px #fff;transform:scaleX(0.86);transform-origin:left center">0</div>
<svg class="a" style="left:941px;top:1053px;" width="28" height="30" viewBox="0 0 28 30"><defs><linearGradient id="ug941" x1="0" y1="0" x2="0" y2="1"><stop offset="0" stop-color="#36d8f6"/><stop offset="1" stop-color="#1fa3d0"/></linearGradient></defs><circle cx="14" cy="7.6" r="7.8" fill="url(#ug941)"/><path d="M0.3 28 Q0.8 18 6 15.5 Q9 14.3 14 14.3 Q19 14.3 22 15.5 Q27.2 18 27.7 28 Q27.7 29.8 26 29.8 H2 Q0.3 29.8 0.3 28 Z" fill="url(#ug941)"/><path d="M10.2 14.6 H17.6 L14 23.8 Z" fill="#e0f6fc" opacity="0.9"/></svg>
<div class="t" style="left:977.70px;top:1057.53px;font-size:23.00px;color:#323130;font-weight:400;-webkit-text-stroke:0.31px #fff;transform:scaleX(0.86);transform-origin:left center">0</div>
<svg class="a" style="left:1319px;top:1054px;" width="30" height="28" viewBox="0 0 30 28"><g fill="none" stroke-width="1.2"><ellipse cx="15" cy="14" rx="8.3" ry="17.6" transform="rotate(-45 15 14)" stroke="#a6a6a6"/><ellipse cx="15" cy="14" rx="8.3" ry="17.6" transform="rotate(45 15 14)" stroke="#4b93ea"/></g><circle cx="15" cy="14" r="5.1" fill="#1a7ad9"/><circle cx="12.4" cy="14" r="1.5" fill="#fff"/><circle cx="17.8" cy="14" r="1.2" fill="#fff"/><circle cx="15" cy="16.9" r="1.2" fill="#fff"/><path d="M14 10.5 L16 13.5" stroke="#9cc9f5" stroke-width=".8"/></svg>
<div class="t" style="left:1356.70px;top:1057.53px;font-size:23.00px;color:#323130;font-weight:400;-webkit-text-stroke:0.31px #fff;transform:scaleX(0.86);transform-origin:left center">0</div>
</body></html>
